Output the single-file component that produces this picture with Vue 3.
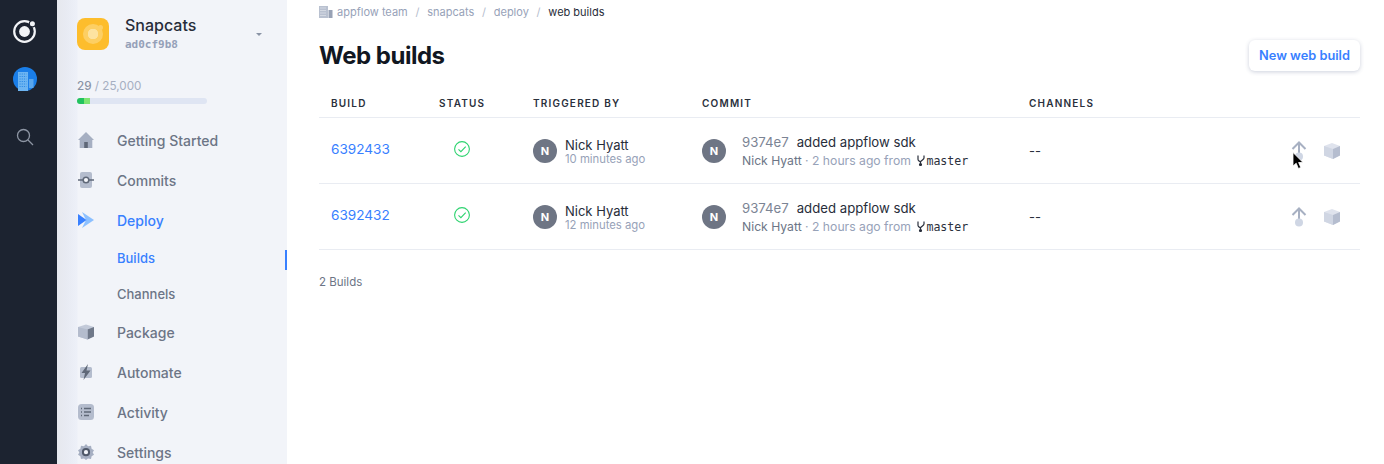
<script setup>
const topNav = [
  { name: 'Getting Started', icon: 'home' },
  { name: 'Commits', icon: 'commit' },
]
const bottomNav = [
  { name: 'Package', icon: 'box' },
  { name: 'Automate', icon: 'bolt' },
  { name: 'Activity', icon: 'list' },
  { name: 'Settings', icon: 'gear' },
]
const builds = [
  { id: '6392433', time: '10 minutes ago' },
  { id: '6392432', time: '12 minutes ago' },
]
</script>

<template>
  <div class="page">
    <aside class="rail">
      <svg class="logo" width="26" height="26" viewBox="0 0 26 26">
        <circle cx="12.5" cy="13.5" r="10.3" fill="none" stroke="#f2f4f7" stroke-width="2.2" />
        <circle cx="12.5" cy="13.5" r="5.4" fill="#f2f4f7" />
        <circle cx="20.4" cy="5.8" r="3.6" fill="#1c2330" />
        <circle cx="20.4" cy="5.8" r="2.5" fill="#f2f4f7" />
      </svg>
      <div class="org">
        <svg width="24" height="24" viewBox="0 0 24 24">
          <circle cx="12" cy="12" r="12" fill="#1a7ee8" />
          <rect x="5" y="5" width="10" height="19" fill="#6db5f2" />
          <rect x="16" y="12" width="4.500" height="9" fill="#5aa6ec" />
          <path d="M6.500 7h7M6.500 9.500h7M6.500 12h7M6.500 14.500h7M6.500 17h7M6.500 19.500h7" stroke="#2f8de6" stroke-width="1" stroke-dasharray="1.200 1" />
        </svg>
      </div>
      <svg class="search" width="18" height="18" viewBox="0 0 18 18" fill="none" stroke="#8d95a3" stroke-width="1.300">
        <circle cx="7.500" cy="7.500" r="6" />
        <path d="M12 12l5 5" />
      </svg>
    </aside>

    <nav class="sidebar">
      <div class="app-head">
        <div class="app-icon"><span class="app-ring"><span class="app-dot"></span></span></div>
        <div class="app-text">
          <div class="app-name">Snapcats</div>
          <div class="app-hash">ad0cf9b8</div>
        </div>
        <span class="caret"></span>
      </div>

      <div class="usage">
        <div class="usage-label"><b>29</b> / 25,000</div>
        <div class="usage-bar"><span class="bar-a"></span><span class="bar-b"></span></div>
      </div>

      <ul class="menu">
        <li v-for="item in topNav" :key="item.name" class="menu-item">
          <svg class="menu-icon" width="16" height="16" viewBox="0 0 16 16">
            <template v-if="item.icon === 'home'">
              <path d="M8 0L16 8H14.300V16H1.700V8H0Z" fill="#a6afc2" />
              <rect x="6.200" y="10" width="3.600" height="6" fill="#5f6878" />
            </template>
            <template v-else>
              <rect x="2" y="0" width="12" height="16" rx="2" fill="#b4bccd" />
              <path d="M0 8h16" stroke="#5f6878" stroke-width="1.500" />
              <circle cx="8" cy="8" r="2.800" fill="#f2f4f9" stroke="#5f6878" stroke-width="1.500" />
            </template>
          </svg>
          {{ item.name }}
        </li>
        <li class="menu-item active">
          <svg class="menu-icon" width="16" height="16" viewBox="0 0 16 16">
            <path d="M4 0L16 8L4 16L8 8Z" fill="#8cc0ff" />
            <path d="M0 2L8.500 8L0 14Z" fill="#3880ff" />
          </svg>
          Deploy
        </li>
        <li class="sub-item current">Builds</li>
        <li class="sub-item">Channels</li>
        <li v-for="item in bottomNav" :key="item.name" class="menu-item">
          <svg class="menu-icon" width="16" height="16" viewBox="0 0 16 16">
            <template v-if="item.icon === 'box'">
              <path d="M8 0.500L16 3V12.500L9.500 15.500L0 12.500V3Z" fill="#c3cad9" />
              <path d="M9.500 5.500L16 3V12.500L9.500 15.500Z" fill="#6f7889" />
              <path d="M0 3L9.500 5.500V15.500L0 12.500Z" fill="#b4bccd" />
            </template>
            <template v-else-if="item.icon === 'bolt'">
              <rect x="2" y="3" width="12" height="11" rx="1.500" fill="#b4bccd" />
              <path d="M10 0L3.500 9H7L5.500 16L12.500 6.500H8.500Z" fill="#5f6878" />
            </template>
            <template v-else-if="item.icon === 'list'">
              <rect width="16" height="16" rx="3.500" fill="#b4bccd" />
              <path d="M6 4.500h7M6 8h7M6 11.500h5" stroke="#5f6878" stroke-width="1.500" />
              <path d="M3 4.500h1M3 8h1M3 11.500h1" stroke="#5f6878" stroke-width="1.500" />
            </template>
            <template v-else>
              <path d="M8 0L10 2.200L13 1.800L13.600 4.700L16 6.200L14.700 8.500L16 10.800L13.600 12.300L13 15L10 14.500L8 16L6 14.500L3 15L2.400 12.300L0 10.800L1.300 8.500L0 6.200L2.400 4.700L3 1.800L6 2.200Z" fill="#a6afc2" />
              <circle cx="8" cy="8.200" r="3.100" fill="#f2f4f9" stroke="#4f5869" stroke-width="2" />
            </template>
          </svg>
          {{ item.name }}
        </li>
      </ul>
    </nav>

    <main class="main">
      <div class="crumbs">
        <svg width="14" height="12" viewBox="0 0 14 12">
          <rect x="0" y="0" width="9" height="12" fill="#b9c1d0" />
          <rect x="9.500" y="4" width="4" height="8" fill="#98a2b5" />
          <path d="M1.500 2h6M1.500 4.500h6M1.500 7h6M1.500 9.500h6" stroke="#eef0f5" stroke-width="1" stroke-dasharray="1 1" />
        </svg>
        <span>appflow team</span><i>/</i><span>snapcats</span><i>/</i><span>deploy</span><i>/</i><span class="here">web builds</span>
      </div>

      <header class="title-row">
        <h1>Web builds</h1>
        <button class="new-build">New web build</button>
      </header>

      <div class="row head">
        <div>Build</div>
        <div>Status</div>
        <div>Triggered by</div>
        <div>Commit</div>
        <div>Channels</div>
      </div>

      <div v-for="b in builds" :key="b.id" class="row body">
        <a class="build-id">{{ b.id }}</a>
        <div class="status">
          <svg width="16" height="16" viewBox="0 0 16 16" fill="none" stroke="#2dd36f" stroke-width="1.100">
            <circle cx="8" cy="8" r="7.400" />
            <path d="M4.500 8.300l2.400 2.400 4.800-5" />
          </svg>
        </div>
        <div class="person">
          <span class="avatar">N</span>
          <div class="trigger">
            <div class="person-name">Nick Hyatt</div>
            <div class="muted when">{{ b.time }}</div>
          </div>
        </div>
        <div class="person">
          <span class="avatar">N</span>
          <div class="commit">
            <div class="commit-top"><span class="sha">9374e7</span>added appflow sdk</div>
            <div class="commit-sub">
              <span class="author">Nick Hyatt</span><span class="muted"> · 2 hours ago from </span>
              <svg class="branch-icon" width="8" height="11" viewBox="0 0 8 11" fill="none" stroke="#2a303c" stroke-width="1.200">
                <path d="M1 0.500V4.500C1 5.800 2.500 6.300 3.500 6.800V10.500M7 0.500V3C7 4.500 4.500 5 3.500 6.800" />
                <circle cx="3.500" cy="9.500" r="1" />
              </svg><span class="branch">master</span>
            </div>
          </div>
        </div>
        <div class="channels">--</div>
        <div class="actions">
          <svg width="16" height="20" viewBox="0 0 16 20" fill="none">
            <path d="M8 1.500V17M1.500 8L8 1.500L14.500 8" stroke="#a7b0c2" stroke-width="2" />
            <circle cx="8" cy="15.500" r="4" fill="#cfd6e4" />
          </svg>
          <svg width="16" height="16" viewBox="0 0 16 16">
            <path d="M8 0L16 3V12.500L9 16L0 12.500V3Z" fill="#dfe3ed" />
            <path d="M9 6L16 3V12.500L9 16Z" fill="#b5bdcf" />
            <path d="M0 3L9 6V16L0 12.500Z" fill="#d0d6e3" />
          </svg>
        </div>
      </div>

      <p class="count">2 Builds</p>
    </main>

    <svg class="cursor" width="12" height="18" viewBox="0 0 12 18">
      <path d="M1 0.500V14L4.200 11.200L6.400 16.500L8.800 15.500L6.600 10.500H11Z" fill="#000" stroke="#fff" stroke-width="0.800" />
    </svg>
  </div>
</template>

<style>
html, body {
  margin: 0;
  background: #fff;
}
</style>

<style scoped>
* {
  box-sizing: border-box;
}

.page {
  display: flex;
  position: relative;
  height: 464px;
  overflow: hidden;
  font-family: Inter, "Liberation Sans", sans-serif;
  color: #1c2330;
}

.rail {
  width: 57px;
  flex-shrink: 0;
  background: #1c2330;
  display: flex;
  flex-direction: column;
  align-items: center;
  padding: 18px 8px 0 0;
}

.logo {
  display: block;
}

.org {
  margin-top: 23px;
  height: 24px;
}

.org svg {
  display: block;
}

.search {
  margin-top: 37px;
}

.sidebar {
  width: 230px;
  flex-shrink: 0;
  padding: 18px 0 0 20px;
  background: linear-gradient(90deg, #e6e8ee 0, #e8ebf3 10px, #edf0f8 20px, #f2f4f9 21px);
}

.app-head {
  display: flex;
  align-items: center;
  height: 32px;
}

.app-icon {
  width: 32px;
  height: 32px;
  border-radius: 8px;
  background: #fdbd2c;
  display: flex;
  align-items: center;
  justify-content: center;
}

.app-ring {
  width: 20px;
  height: 20px;
  border-radius: 50%;
  background: radial-gradient(circle, #fde3a0 0 5px, #fdcf63 5.500px);
  position: relative;
}

.app-dot {
  position: absolute;
  top: 1px;
  right: 0;
  width: 5px;
  height: 5px;
  border-radius: 50%;
  background: #fdcf63;
}

.app-text {
  margin-left: 16px;
  width: 128px;
}

.app-name {
  font-size: 16px;
  font-weight: 500;
  line-height: 18px;
  color: #272d3a;
  margin-top: -1px;
}

.app-hash {
  font-family: "DejaVu Sans Mono", monospace;
  font-size: 11px;
  font-weight: 600;
  line-height: 14px;
  margin-top: 4px;
  color: #95a0b8;
}

.caret {
  width: 0;
  height: 0;
  margin-left: 3px;
  border: 3px solid transparent;
  border-top: 3px solid #8a93a5;
  border-bottom: 0;
}

.usage {
  margin-top: 28px;
}

.usage-label {
  font-size: 11.700px;
  line-height: 16px;
  color: #a6afc2;
}

.usage-label b {
  font-weight: 500;
  color: #8a93a5;
}

.usage-bar {
  display: flex;
  width: 130px;
  height: 6px;
  margin-top: 4px;
  border-radius: 3px;
  overflow: hidden;
  background: #dfe5f3;
}

.bar-a {
  width: 7px;
  background: #22c35e;
}

.bar-b {
  width: 6px;
  background: #7fe573;
}

.menu {
  list-style: none;
  margin: 16px 0 0;
  padding: 0;
}

.menu-item {
  display: flex;
  align-items: center;
  height: 40px;
  font-size: 14px;
  font-weight: 500;
  color: #6c7586;
}

.menu-icon {
  margin-left: 1px;
  margin-right: 23px;
  flex-shrink: 0;
}

.menu-item.active {
  color: #3880ff;
}

.sub-item {
  height: 36px;
  line-height: 36px;
  padding-left: 40px;
  font-size: 13px;
  font-weight: 500;
  color: #6c7586;
}

.sub-item.current {
  color: #3880ff;
  position: relative;
}

.sub-item.current::after {
  content: "";
  position: absolute;
  right: 0;
  top: 10px;
  width: 2px;
  height: 20px;
  background: #3880ff;
}

.main {
  flex: 1;
  padding: 0 24px 0 32px;
  background: #fff;
}

.crumbs {
  display: flex;
  align-items: center;
  height: 24px;
  font-size: 11px;
  color: #97a2b8;
}

.crumbs svg {
  margin-right: 4px;
}

.crumbs i {
  font-style: normal;
  margin: 0 7.750px;
  color: #b4bccd;
}

.crumbs .here {
  color: #272d3a;
}

.title-row {
  display: flex;
  align-items: center;
  justify-content: space-between;
  height: 48px;
  margin-top: 7px;
}

h1 {
  margin: 0;
  font-size: 24px;
  font-weight: 700;
  letter-spacing: -0.500px;
  color: #111722;
}

.new-build {
  width: 111px;
  height: 31px;
  margin-top: 1px;
  padding: 0;
  border: 0;
  border-radius: 6px;
  background: #fff;
  box-shadow: 0 1px 4px rgba(40, 60, 110, 0.24);
  font-family: inherit;
  font-size: 12.800px;
  font-weight: 600;
  color: #3880ff;
}

.row {
  display: grid;
  grid-template-columns: 108px 94px 169px 327px 1fr auto;
  align-items: center;
  padding-left: 12px;
  border-bottom: 1px solid #e9ecf2;
}

.head {
  height: 30px;
  margin-top: 9px;
  padding-top: 1px;
  font-size: 10px;
  font-weight: 600;
  letter-spacing: 1.200px;
  text-transform: uppercase;
  color: #2a303c;
}

.body {
  height: 66px;
}

.build-id {
  font-size: 13.600px;
  color: #3880ff;
  margin-top: -4px;
}

.status {
  padding-left: 15px;
  height: 16px;
  margin-top: -3px;
}

.status svg {
  display: block;
}

.person {
  display: flex;
  align-items: center;
  gap: 8px;
}

.avatar {
  width: 24px;
  height: 24px;
  flex-shrink: 0;
  border-radius: 50%;
  background: #6e7584;
  color: #fff;
  font-size: 11px;
  font-weight: 700;
  text-align: center;
  line-height: 24px;
}

.trigger {
  padding-top: 2px;
}

.person-name {
  font-size: 13px;
  line-height: 16px;
  color: #272d3a;
}

.muted {
  font-size: 11.300px;
  line-height: 14px;
  color: #97a2b8;
}

.when {
  margin-top: -1px;
}

.commit {
  margin-left: 8px;
}

.commit-top {
  font-size: 13.200px;
  line-height: 16px;
  color: #272d3a;
}

.sha {
  color: #7b8494;
  margin-right: 8px;
}

.commit-sub {
  display: flex;
  align-items: center;
  white-space: pre;
  font-size: 12.200px;
  line-height: 14px;
  margin-top: 4px;
}

.commit-sub .muted {
  font-size: inherit;
}

.author {
  color: #6c7586;
}

.branch-icon {
  margin-left: 3px;
  margin-right: 1px;
}

.branch {
  font-family: "DejaVu Sans Mono", monospace;
  font-size: 11.600px;
  color: #2a303c;
}

.channels {
  font-size: 13px;
  color: #2a303c;
}

.actions {
  display: flex;
  align-items: center;
  gap: 17px;
  padding-right: 20px;
}

.count {
  margin: 25px 0 0;
  font-size: 11.500px;
  line-height: 14px;
  color: #6c7586;
}

.cursor {
  position: absolute;
  left: 1292px;
  top: 152px;
}
</style>
